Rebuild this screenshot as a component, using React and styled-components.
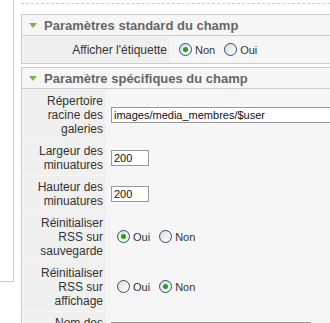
import React from 'react';
import styled, { createGlobalStyle } from 'styled-components';

const Global = createGlobalStyle`
  html, body { margin: 0; padding: 0; background: #fff; overflow: hidden; }
  body { font-family: "Liberation Sans", Arial, Helvetica, sans-serif; }
  #root { width: 330px; height: 323px; overflow: hidden; }
`;

const Page = styled.div`
  display: flex;
  align-items: flex-start;
  width: 330px;
  height: 323px;
  overflow: hidden;
`;

const Side = styled.div`
  flex: none;
  width: 13px;
  height: 281px;
  border-right: 1px solid #ccc;
  border-bottom: 1px solid #ccc;
`;

const Main = styled.div`
  flex: none;
  width: 420px;
  margin-left: 7px;
  padding-top: 3px;
`;

const Dashed = styled.div`
  height: 0;
  border-top: 1px dashed #ccc;
  margin-bottom: 10px;
`;

const Panel = styled.div`
  border: 1px solid #ccc;
  background: #f6f6f6;
  & + & { margin-top: 3px; }
`;

const Header = styled.h3`
  margin: 0;
  display: flex;
  align-items: center;
  gap: 7px;
  height: 20px;
  padding-left: 7px;
  border-bottom: 1px solid #ccc;
  font-size: 13px;
  font-weight: bold;
  color: #666;
`;

const Table = styled.div`
  display: grid;
  grid-template-columns: ${p => p.$key}px 1fr;
  gap: 1px;
  padding: 1px;
`;

const Key = styled.div`
  display: flex;
  align-items: center;
  justify-content: flex-end;
  text-align: right;
  background: #f0f0f0;
  color: #333;
  font-size: 12px;
  line-height: 14px;
  padding: 4px 3px 3px;
  min-height: ${p => p.$min || 0}px;
  box-sizing: border-box;
`;

const Value = styled.div`
  display: flex;
  align-items: center;
  padding: 0 4px;
`;

const TextInput = styled.input`
  box-sizing: border-box;
  width: ${p => p.$w}px;
  height: 16px;
  padding: 0 2px;
  border: 1px solid #999;
  background: #fff;
  font-family: "Liberation Sans", Arial, sans-serif;
  font-size: 11px;
  color: #111;
  outline: none;
`;

const RadioGroup = styled.div`
  display: flex;
  align-items: center;
  padding-left: ${p => p.$pad}px;
`;

const RadioLabel = styled.label`
  display: flex;
  align-items: center;
  gap: 3px;
  margin-right: 9px;
  font-size: 11px;
  color: #333;
`;

const Arrow = () => (
  <svg width="8" height="5" viewBox="0 0 8 5">
    <polygon points="0,0 8,0 4,5" fill="#7cb24f" />
  </svg>
);

const Radio = ({ checked }) => (
  <svg width="13" height="13" viewBox="0 0 13 13">
    <defs>
      <linearGradient id="rg" x1="0" y1="0" x2="1" y2="1">
        <stop offset="0" stopColor="#dcdcd7" />
        <stop offset="1" stopColor="#ffffff" />
      </linearGradient>
    </defs>
    <circle cx="6.5" cy="6.5" r="6" fill="url(#rg)" stroke="#1c5180" strokeWidth="1" />
    {checked && <circle cx="6.5" cy="6.5" r="2.5" fill="#21a121" />}
  </svg>
);

const RadioPair = ({ first, second, checked, pad }) => (
  <RadioGroup $pad={pad}>
    <RadioLabel><Radio checked={checked === first} />{first}</RadioLabel>
    <RadioLabel><Radio checked={checked === second} />{second}</RadioLabel>
  </RadioGroup>
);

export default function App() {
  return (
    <>
      <Global />
      <Page>
        <Side />
        <Main>
          <Dashed />
          <Panel>
            <Header><Arrow />Paramètres standard du champ</Header>
            <Table $key={147}>
              <Key $min={25}>Afficher l'étiquette</Key>
              <Value><RadioPair first="Non" second="Oui" checked="Non" pad={4} /></Value>
            </Table>
          </Panel>
          <Panel>
            <Header><Arrow />Paramètre spécifiques du champ</Header>
            <Table $key={83}>
              <Key>Répertoire racine des galeries</Key>
              <Value><TextInput $w={260} defaultValue="images/media_membres/$user" /></Value>
              <Key>Largeur des minuatures</Key>
              <Value><TextInput $w={38} defaultValue="200" /></Value>
              <Key>Hauteur des minuatures</Key>
              <Value><TextInput $w={38} defaultValue="200" /></Value>
              <Key>Réinitialiser RSS sur sauvegarde</Key>
              <Value><RadioPair first="Oui" second="Non" checked="Oui" pad={6} /></Value>
              <Key>Réinitialiser RSS sur affichage</Key>
              <Value><RadioPair first="Oui" second="Non" checked="Non" pad={6} /></Value>
              <Key>Nom des galeries</Key>
              <Value><TextInput $w={200} defaultValue="" /></Value>
            </Table>
          </Panel>
        </Main>
      </Page>
    </>
  );
}
